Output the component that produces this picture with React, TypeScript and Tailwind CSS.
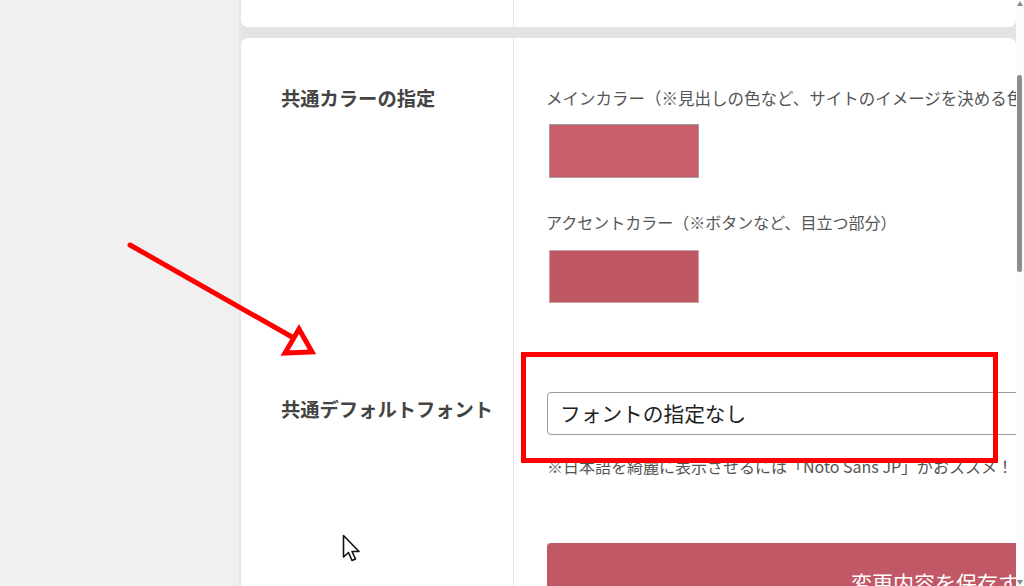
export default function App() {
  return (
    <div
      className="relative flex w-[1024px] h-[586px] overflow-hidden bg-[#f0f0f0]"
      style={{ fontFamily: '"Noto Sans CJK JP", "Noto Sans", sans-serif' }}
    >
      {/* page */}
      <div className="flex flex-1 min-w-0">
        <div className="w-[241px] shrink-0 bg-[#f0f0f0] border-r-[2px] border-[#e8e8e8]" />

        <div className="flex flex-col flex-1 min-w-0 bg-[#e3e3e3] overflow-hidden">
          {/* previous card (bottom edge) */}
          <div className="flex h-[27px] shrink-0 bg-white rounded-b-[7px]">
            <div className="w-[273px] shrink-0 border-r border-[#e6e6e6]" />
            <div className="flex-1" />
          </div>

          {/* color + font card */}
          <div className="mt-[11px] flex flex-col flex-1 bg-white rounded-t-[7px]">
            <div className="flex">
              <div className="w-[273px] shrink-0 border-r border-[#e6e6e6] pl-[40px] pt-[46px]">
                <h2 className="text-[19.3px] leading-[28px] font-bold text-[#444]">共通カラーの指定</h2>
              </div>
              <div className="w-[830px] shrink-0 pl-[32px] pt-[46px] pb-[57px]">
                <p className="text-[16.5px] leading-[28px] text-[#555] whitespace-nowrap">
                  メインカラー（※見出しの色など、サイトのイメージを決める色）
                </p>
                <div className="mt-[12px] ml-[3px] w-[150px] h-[54px] bg-[#c95f69] border border-[#a0a0a0]" />
                <p className="mt-[30px] text-[16px] leading-[28px] text-[#555] whitespace-nowrap">
                  アクセントカラー（※ボタンなど、目立つ部分）
                </p>
                <div className="mt-[14px] ml-[3px] w-[150px] h-[53px] bg-[#bf5863] border border-[#c9a0a4]" />
              </div>
            </div>

            <div className="flex flex-1">
              <div className="w-[273px] shrink-0 border-r border-[#e6e6e6] pl-[40px] pt-[35px]">
                <h2 className="text-[19.3px] leading-[28px] font-bold text-[#444] whitespace-nowrap">共通デフォルトフォント</h2>
              </div>
              <div className="w-[830px] shrink-0 pl-[33px] pt-[32px]">
                <div className="flex items-center h-[43px] px-[12px] border border-[#9a9a9a] rounded-[4px] bg-white">
                  <span className="text-[20.7px] text-[#222]">フォントの指定なし</span>
                </div>
                <p className="mt-[19px] text-[16px] leading-[24px] text-[#555] whitespace-nowrap">
                  ※日本語を綺麗に表示させるには「Noto Sans JP」がおススメ！
                </p>
                <div className="mt-[65px] flex items-center justify-center h-[80px] bg-[#c05865] rounded-t-[4px]">
                  <span className="text-[21px] text-white">変更内容を保存する</span>
                </div>
              </div>
            </div>
          </div>
        </div>
      </div>

      {/* scrollbar */}
      <div className="relative w-[8px] shrink-0 bg-[#fbfbfb]">
        <div className="mx-auto mt-[1px] w-0 h-0 border-x-[3px] border-x-transparent border-b-[5px] border-b-[#8a8a8a]" />
        <div className="ml-[1px] mt-[69px] w-[5px] h-[197px] rounded-full bg-[#8c8c8c]" />
        <div className="absolute bottom-[1px] left-[1px] w-0 h-0 border-x-[3px] border-x-transparent border-t-[5px] border-t-[#8a8a8a]" />
      </div>

      {/* annotation box */}
      <div className="absolute left-[521px] top-[352px] w-[477px] h-[111px] border-[5px] border-[#ff0000]" />

      {/* annotation arrow */}
      <svg className="absolute left-0 top-0 pointer-events-none" width="1024" height="586">
        <line x1="130" y1="245" x2="292" y2="337" stroke="#ff0000" strokeWidth="5" strokeLinecap="round" />
        <polygon points="299,329 285,353 312,352" fill="none" stroke="#ff0000" strokeWidth="5" strokeLinejoin="miter" />
      </svg>

      {/* mouse cursor */}
      <svg className="absolute left-[342px] top-[534px]" width="24" height="30" viewBox="0 0 24 30">
        <path
          d="M1.5 1.5 L1.5 23 L6.5 18.5 L10 26.5 L13.5 25 L10 17.5 L17 17.5 Z"
          fill="white"
          stroke="#111"
          strokeWidth="1.6"
          strokeLinejoin="round"
        />
      </svg>
    </div>
  )
}
